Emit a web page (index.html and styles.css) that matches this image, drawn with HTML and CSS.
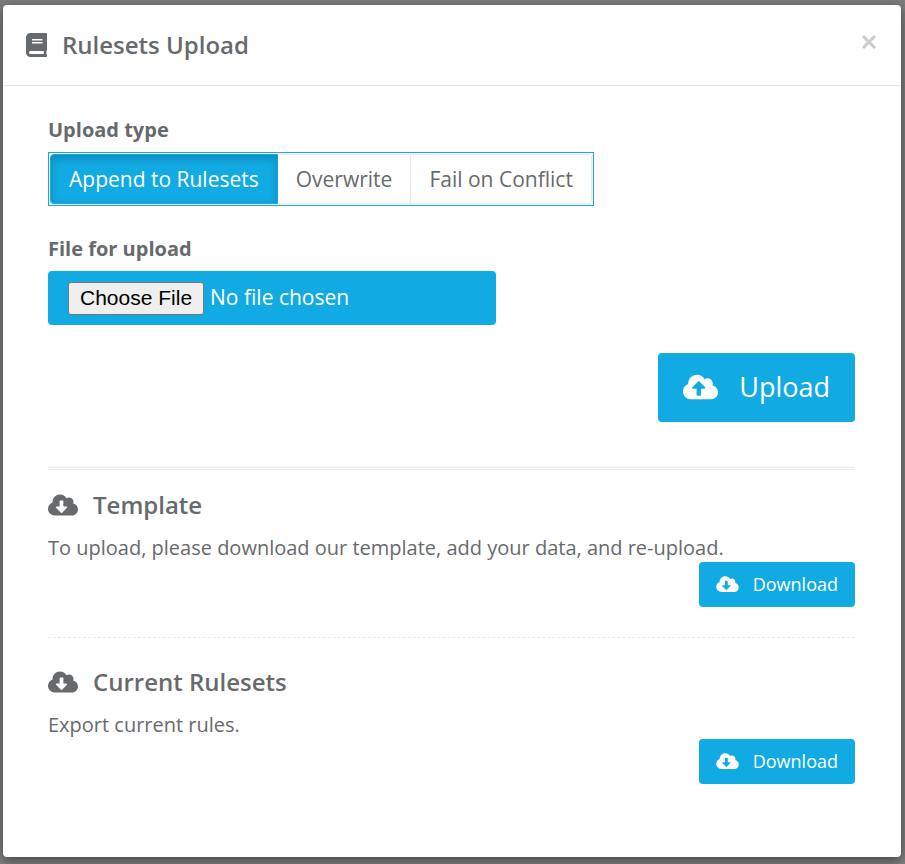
FILE: index.html
```html
<!DOCTYPE html>
<html lang="en">
<head>
<meta charset="utf-8">
<meta name="viewport" content="width=device-width, initial-scale=1">
<title>Rulesets Upload</title>
<link rel="stylesheet" href="styles.css">
</head>
<body>
<svg class="sprite" aria-hidden="true">
  <symbol id="book" viewBox="0 0 448 512"><path d="M448 360V24c0-13.300-10.700-24-24-24H96C43 0 0 43 0 96v320c0 53 43 96 96 96h328c13.300 0 24-10.700 24-24v-16c0-7.500-3.500-14.300-8.900-18.700-4.200-15.400-4.200-59.300 0-74.700 5.400-4.300 8.900-11.100 8.900-18.600zM128 134c0-3.300 2.700-6 6-6h212c3.300 0 6 2.700 6 6v20c0 3.300-2.700 6-6 6H134c-3.300 0-6-2.700-6-6v-20zm0 64c0-3.300 2.700-6 6-6h212c3.300 0 6 2.700 6 6v20c0 3.300-2.700 6-6 6H134c-3.300 0-6-2.700-6-6v-20zm253.400 250H96c-17.700 0-32-14.300-32-32 0-17.600 14.400-32 32-32h285.400c-1.900 17.100-1.900 46.900 0 64z"/></symbol>
  <symbol id="cloud-up" viewBox="0 0 640 512"><path d="M537.6 226.600c4.100-10.700 6.400-22.400 6.400-34.600 0-53-43-96-96-96-19.700 0-38.100 6-53.300 16.200C367 64.200 315.300 32 256 32c-88.400 0-160 71.600-160 160 0 2.700.1 5.400.2 8.100C40.200 219.800 0 273.200 0 336c0 79.500 64.500 144 144 144h368c70.700 0 128-57.300 128-128 0-61.900-44-113.600-102.400-125.400zM393.400 288H328v112c0 8.800-7.200 16-16 16h-48c-8.800 0-16-7.200-16-16V288h-65.400c-14.300 0-21.400-17.200-11.300-27.300l105.400-105.400c6.200-6.200 16.400-6.200 22.600 0l105.400 105.400c10.100 10.100 2.900 27.300-11.300 27.300z"/></symbol>
  <symbol id="cloud-down" viewBox="0 0 640 512"><path d="M537.6 226.600c4.100-10.700 6.400-22.400 6.400-34.600 0-53-43-96-96-96-19.700 0-38.100 6-53.300 16.200C367 64.200 315.300 32 256 32c-88.400 0-160 71.600-160 160 0 2.700.1 5.400.2 8.100C40.200 219.800 0 273.200 0 336c0 79.500 64.500 144 144 144h368c70.700 0 128-57.300 128-128 0-61.900-44-113.600-102.400-125.400zm-132.900 88.700L299.300 420.700c-6.200 6.200-16.400 6.200-22.600 0L171.300 315.300c-10.100-10.100-2.900-27.300 11.300-27.300H248V176c0-8.800 7.200-16 16-16h48c8.800 0 16 7.200 16 16v112h65.400c14.200 0 21.400 17.200 11.300 27.300z"/></symbol>
</svg>
<div class="modal" role="dialog" aria-labelledby="modal-title">
  <header class="modal-header">
    <svg class="icon icon-book" aria-hidden="true"><use href="#book"/></svg>
    <h1 class="title" id="modal-title">Rulesets Upload</h1>
    <button class="close" type="button" aria-label="Close"><svg class="icon-close" viewBox="0 0 14 14" aria-hidden="true"><path d="M1 1l12 12M13 1l-12 12"/></svg></button>
  </header>
  <form class="modal-body">
    <fieldset class="upload-type">
      <legend class="label">Upload type</legend>
      <div class="segments">
        <label class="segment"><input type="radio" name="type" checked>Append to Rulesets</label>
        <label class="segment"><input type="radio" name="type">Overwrite</label>
        <label class="segment"><input type="radio" name="type">Fail on Conflict</label>
      </div>
    </fieldset>
    <label class="label" for="file">File for upload</label>
    <input class="file" id="file" type="file">
    <div class="actions upload-actions">
      <button class="btn btn-large" type="submit"><svg class="icon icon-up" aria-hidden="true"><use href="#cloud-up"/></svg>Upload</button>
    </div>
    <hr class="rule-double">
    <section class="download">
      <h2 class="title"><svg class="icon icon-cloud" aria-hidden="true"><use href="#cloud-down"/></svg>Template</h2>
      <p class="text">To upload, please download our template, add your data, and re-upload.</p>
      <div class="actions"><button class="btn" type="button"><svg class="icon icon-down" aria-hidden="true"><use href="#cloud-down"/></svg>Download</button></div>
    </section>
    <hr class="rule-dashed">
    <section class="download">
      <h2 class="title"><svg class="icon icon-cloud" aria-hidden="true"><use href="#cloud-down"/></svg>Current Rulesets</h2>
      <p class="text">Export current rules.</p>
      <div class="actions"><button class="btn" type="button"><svg class="icon icon-down" aria-hidden="true"><use href="#cloud-down"/></svg>Download</button></div>
    </section>
  </form>
</div>
</body>
</html>
```
FILE: styles.css
```css
* { box-sizing: border-box; }

body {
  margin: 0;
  min-height: 100vh;
  padding: 5px 4px 7px 3px;
  display: flex;
  background: #7f7f7f;
  color: #676a6c;
  font-family: "Open Sans", sans-serif;
  font-size: 20px;
  line-height: 28px;
}

.sprite { position: absolute; width: 0; height: 0; }

.modal {
  flex: 1;
  min-width: 0;
  background: #fff;
  border-radius: 4px;
  box-shadow: 0 3px 12px rgba(0, 0, 0, 0.5);
}

.modal-header {
  display: flex;
  align-items: center;
  height: 81px;
  padding: 0 25px 0 23px;
  border-bottom: 1px solid #e5e5e5;
}

.title {
  display: flex;
  align-items: center;
  margin: 0;
  font-size: 24px;
  line-height: 32px;
  font-weight: 600;
}

.icon { flex: none; fill: currentColor; }
.icon-book { width: 21px; height: 24px; margin-right: 15px; }
.icon-cloud { width: 30px; height: 24px; margin-right: 15px; }
.icon-up { width: 35px; height: 28px; margin-right: 21px; }
.icon-down { width: 23px; height: 18px; margin-right: 14px; }

.close {
  display: flex;
  margin: 0 0 6px auto;
  padding: 0;
  border: 0;
  background: none;
  color: #ccc;
}
.icon-close { width: 14px; height: 14px; fill: none; stroke: currentColor; stroke-width: 3; }

.modal-body { padding: 30px 46px 73px 45px; }

.upload-type { margin: 0 0 29px; padding: 0; border: 0; min-width: 0; }

.label { display: block; padding: 0; margin-bottom: 8px; font-weight: 700; }

.segments {
  display: flex;
  width: fit-content;
  padding: 1px;
  border: 1px solid #12aae2;
}

.segment {
  position: relative;
  padding: 10px 18px;
  border: 1px solid #e7eaec;
  border-left-width: 0;
  font-size: 21px;
  line-height: 28px;
}
.segment:first-child { border-left-width: 1px; border-radius: 4px 0 0 4px; }
.segment:last-child { border-radius: 0 4px 4px 0; }
.segment input { position: absolute; inset: 0; width: 100%; height: 100%; margin: 0; opacity: 0; cursor: pointer; }
.segment:has(:checked) {
  background: #12aae2;
  border-color: #12aae2;
  color: #fff;
  box-shadow: inset 0 3px 8px rgba(0, 0, 0, 0.2);
}

.file {
  display: block;
  width: 448px;
  max-width: 100%;
  height: 54px;
  padding: 10px 20px;
  border-radius: 4px;
  background: #12aae2;
  color: #fff;
  font: 21px/32px "Open Sans", sans-serif;
}
.file::file-selector-button {
  height: 33px;
  margin: 0 6px 0 0;
  padding: 1px 11px;
  border: 1px solid #767676;
  border-radius: 3px;
  background: #efefef;
  color: #000;
  font: 21px "Liberation Sans", sans-serif;
}

.actions { display: flex; justify-content: flex-end; }
.upload-actions { margin-top: 28px; }

.btn {
  display: flex;
  align-items: center;
  height: 45px;
  padding: 0 17px 2px;
  border: 0;
  border-radius: 4px;
  background: #12aae2;
  color: #fff;
  font: 18px "Open Sans", sans-serif;
}
.btn-large { height: 69px; padding: 0 25px 2px; font-size: 27px; }

hr { margin: 0; border: 0; }
.rule-double { margin: 45px 0 19px; border-top: 3px double #e7eaec; }
.rule-dashed { margin: 30px 0 28px; border-top: 1px dashed #e7eaec; }

.text { margin: 13px 0 0; }
```
